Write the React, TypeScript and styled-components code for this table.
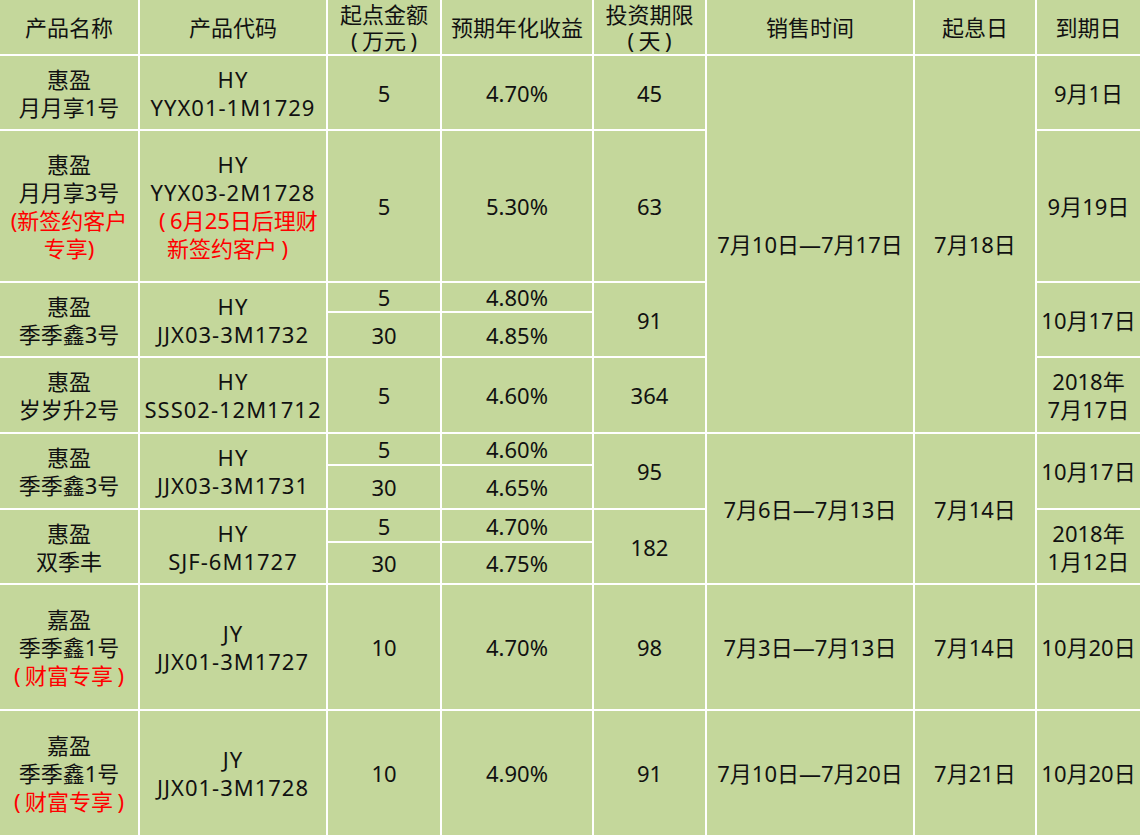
import React from 'react';
import styled, { createGlobalStyle } from 'styled-components';

const GlobalStyle = createGlobalStyle`
    html, body {
        margin: 0;
        padding: 0;
        background: #ffffff;
    }
`;

const Table = styled.table`
    width: 1140px;
    table-layout: fixed;
    border-collapse: collapse;
    border-style: hidden;
    background: #c4d79b;
    color: #111111;
    font-family: "Noto Sans", "Noto Sans CJK SC", sans-serif;
    font-size: 22px;
`;

const Row = styled.tr<{ $h: number }>`
    height: ${p => p.$h}px;
`;

const HeadCell = styled.th`
    border: 2px solid #ffffff;
    padding: 0;
    font-weight: normal;
    line-height: 26px;
    text-align: center;
    vertical-align: middle;
    white-space: nowrap;
    overflow: hidden;
`;

const Cell = styled.td`
    border: 2px solid #ffffff;
    padding: 0;
    line-height: 28px;
    text-align: center;
    vertical-align: middle;
    white-space: nowrap;
`;

const Note = styled.span`
    color: #ff0000;
`;

// product codes are set a little wider in the original
const Code = styled.span`
    letter-spacing: 1px;
`;

// a full-width bracket: the glyph sits in a 1em box, against the text it encloses
const Bracket = styled.span<{ $open?: boolean }>`
    display: inline-block;
    width: 1em;
    text-align: ${p => p.$open ? 'right' : 'left'};
    padding: ${p => p.$open ? '0 0.2em 0 0' : '0 0 0 0.2em'};
    box-sizing: border-box;
`;

const Open = () => <Bracket $open>(</Bracket>;
const Close = () => <Bracket>)</Bracket>;

const widths = [139, 188, 114, 152, 113, 208, 122, 104];

export default function App() {
    return <>
        <GlobalStyle />
        <Table>
            <colgroup>
                {widths.map((w, i) => <col key={i} style={{ width: w }} />)}
            </colgroup>
            <thead>
                <Row $h={55}>
                    <HeadCell>产品名称</HeadCell>
                    <HeadCell>产品代码</HeadCell>
                    <HeadCell>起点金额<br /><Open />万元<Close /></HeadCell>
                    <HeadCell>预期年化收益</HeadCell>
                    <HeadCell>投资期限<br /><Open />天<Close /></HeadCell>
                    <HeadCell>销售时间</HeadCell>
                    <HeadCell>起息日</HeadCell>
                    <HeadCell>到期日</HeadCell>
                </Row>
            </thead>
            <tbody>
                <Row $h={75}>
                    <Cell>惠盈<br />月月享1号</Cell>
                    <Cell><Code>HY<br />YYX01-1M1729</Code></Cell>
                    <Cell>5</Cell>
                    <Cell>4.70%</Cell>
                    <Cell>45</Cell>
                    <Cell rowSpan={5}>7月10日—7月17日</Cell>
                    <Cell rowSpan={5}>7月18日</Cell>
                    <Cell>9月1日</Cell>
                </Row>
                <Row $h={152}>
                    <Cell>惠盈<br />月月享3号<br /><Note>(新签约客户<br />专享)</Note></Cell>
                    <Cell><Code>HY<br />YYX03-2M1728</Code><br /><Note><Open />6月25日后理财<br />新签约客户<Close /></Note></Cell>
                    <Cell>5</Cell>
                    <Cell>5.30%</Cell>
                    <Cell>63</Cell>
                    <Cell>9月19日</Cell>
                </Row>
                <Row $h={30}>
                    <Cell rowSpan={2}>惠盈<br />季季鑫3号</Cell>
                    <Cell rowSpan={2}><Code>HY<br />JJX03-3M1732</Code></Cell>
                    <Cell>5</Cell>
                    <Cell>4.80%</Cell>
                    <Cell rowSpan={2}>91</Cell>
                    <Cell rowSpan={2}>10月17日</Cell>
                </Row>
                <Row $h={45}>
                    <Cell>30</Cell>
                    <Cell>4.85%</Cell>
                </Row>
                <Row $h={76}>
                    <Cell>惠盈<br />岁岁升2号</Cell>
                    <Cell><Code>HY<br />SSS02-12M1712</Code></Cell>
                    <Cell>5</Cell>
                    <Cell>4.60%</Cell>
                    <Cell>364</Cell>
                    <Cell>2018年<br />7月17日</Cell>
                </Row>
                <Row $h={32}>
                    <Cell rowSpan={2}>惠盈<br />季季鑫3号</Cell>
                    <Cell rowSpan={2}><Code>HY<br />JJX03-3M1731</Code></Cell>
                    <Cell>5</Cell>
                    <Cell>4.60%</Cell>
                    <Cell rowSpan={2}>95</Cell>
                    <Cell rowSpan={4}>7月6日—7月13日</Cell>
                    <Cell rowSpan={4}>7月14日</Cell>
                    <Cell rowSpan={2}>10月17日</Cell>
                </Row>
                <Row $h={44}>
                    <Cell>30</Cell>
                    <Cell>4.65%</Cell>
                </Row>
                <Row $h={33}>
                    <Cell rowSpan={2}>惠盈<br />双季丰</Cell>
                    <Cell rowSpan={2}><Code>HY<br />SJF-6M1727</Code></Cell>
                    <Cell>5</Cell>
                    <Cell>4.70%</Cell>
                    <Cell rowSpan={2}>182</Cell>
                    <Cell rowSpan={2}>2018年<br />1月12日</Cell>
                </Row>
                <Row $h={42}>
                    <Cell>30</Cell>
                    <Cell>4.75%</Cell>
                </Row>
                <Row $h={126}>
                    <Cell>嘉盈<br />季季鑫1号<br /><Note><Open />财富专享<Close /></Note></Cell>
                    <Cell><Code>JY<br />JJX01-3M1727</Code></Cell>
                    <Cell>10</Cell>
                    <Cell>4.70%</Cell>
                    <Cell>98</Cell>
                    <Cell>7月3日—7月13日</Cell>
                    <Cell>7月14日</Cell>
                    <Cell>10月20日</Cell>
                </Row>
                <Row $h={125}>
                    <Cell>嘉盈<br />季季鑫1号<br /><Note><Open />财富专享<Close /></Note></Cell>
                    <Cell><Code>JY<br />JJX01-3M1728</Code></Cell>
                    <Cell>10</Cell>
                    <Cell>4.90%</Cell>
                    <Cell>91</Cell>
                    <Cell>7月10日—7月20日</Cell>
                    <Cell>7月21日</Cell>
                    <Cell>10月20日</Cell>
                </Row>
            </tbody>
        </Table>
    </>;
}
